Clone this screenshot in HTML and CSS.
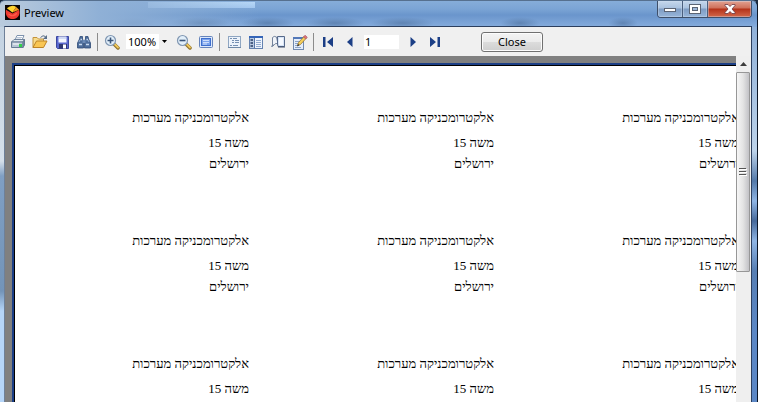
FILE: index.html
```html
<!DOCTYPE html>
<html lang="en">
<head>
    <meta charset="UTF-8">
    <meta name="viewport" content="width=device-width, initial-scale=1.0">
    <title>Preview</title>
    <link rel="stylesheet" href="styles.css">
</head>
<body>
    <div class="window">
        <header class="titlebar">
            <svg class="app-icon" viewBox="0 0 16 16">
                <rect width="16" height="16" fill="#0a0505"/>
                <path d="M1 5 L8 9 L15 5 C17 12 12 15 8 15 C3 15 0 11 1 5Z" fill="#ee3a30"/>
                <path d="M3 9 L8 11 L13 8 C13 11 10 12 8 12 C6 12 4 11 3 9Z" fill="#ff5b4a"/>
                <path d="M2 3.500 Q7 -1 12 2 L8 8Z" fill="#ffd531"/>
                <path d="M12 2 L15 5 L8 8Z" fill="#f39a1f"/>
            </svg>
            <h1 class="title">Preview</h1>
            <div class="window-buttons">
                <button class="win-btn" aria-label="Minimize">
                    <svg width="14" height="10" viewBox="0 0 14 10"><rect x="1.500" y="4.500" width="11" height="3" fill="#fff" stroke="#5b6474"/></svg>
                </button>
                <button class="win-btn" aria-label="Maximize">
                    <svg width="12" height="10" viewBox="0 0 12 10"><rect x=".5" y=".5" width="11" height="9" fill="#fff" stroke="#5b6474"/><rect x="3.500" y="3.500" width="5" height="3" fill="#9db7d8" stroke="#5b6474"/></svg>
                </button>
                <button class="win-btn win-close" aria-label="Close window">
                    <svg width="12" height="10" viewBox="0 0 12 10"><path d="M1 .5H4L6 2.500 8 .5H11V1.500L8 5 11 8.500V9.500H8L6 7.500 4 9.500H1V8.500L4 5 1 1.500Z" fill="#fff" stroke="#6b3a45" stroke-width=".8"/></svg>
                </button>
            </div>
        </header>

        <main class="client">
            <div class="toolbar">
                <button class="tool" aria-label="Print">
                    <svg viewBox="0 0 16 16">
                        <path d="M5 6 L7 1.500H14L12 6Z" fill="#fff" stroke="#7d92ad"/>
                        <path d="M7 3.500H12M6.500 5H11" stroke="#9db0c8" stroke-width=".7"/>
                        <path d="M1.500 8 L4 5.500H14.500L13 8Z" fill="#dfe7ef" stroke="#70849c"/>
                        <path d="M1.500 8H13V13.500H1.500Z" fill="#b7c5d4" stroke="#667b94"/>
                        <path d="M13 8 L14.500 5.500V11L13 13.500Z" fill="#7a8da5" stroke="#667b94"/>
                        <path d="M3 10H9" stroke="#fff"/>
                        <rect x="9" y="10" width="3" height="3" fill="#2fd048"/>
                    </svg>
                </button>
                <button class="tool" aria-label="Open">
                    <svg viewBox="0 0 16 16">
                        <path d="M1 13.500V3.500H5L6.500 5H11.500V7" fill="#f7dc8e" stroke="#c4933b"/>
                        <path d="M1 13.500 L4.500 7H15L11.500 13.500Z" fill="#f9c654" stroke="#bd8326"/>
                        <path d="M8.500 3.500 Q11 0.500 13.500 2.500" fill="none" stroke="#5a6e87"/>
                        <path d="M15 1V5H11Z" fill="#5a6e87"/>
                    </svg>
                </button>
                <button class="tool" aria-label="Save">
                    <svg viewBox="0 0 16 16">
                        <path d="M2.500 2.500H14.500V14.500H3.500L2.500 13.500Z" fill="#5a68cf" stroke="#3a469f"/>
                        <rect x="4.500" y="2.500" width="8" height="6" fill="#f3f6ff"/>
                        <path d="M5 3H12V5H5Z" fill="#cfd9f5"/>
                        <rect x="5" y="10" width="8" height="4.500" fill="#2f3770"/>
                        <rect x="9" y="10.500" width="3" height="4" fill="#fff"/>
                    </svg>
                </button>
                <button class="tool" aria-label="Find">
                    <svg viewBox="0 0 16 16">
                        <path d="M4 2.500H6.500V5L7.500 7V14H1.500V9L3.500 5ZM9.500 2.500H12L12.500 5 14.500 9V14H8.500V7L9.500 5Z" fill="#4d6d9b" stroke="#2e4a76" stroke-width=".8"/>
                        <path d="M3 10.500H6M10 10.500H13M4.500 5.500H6M10.500 5.500H12" stroke="#c9daee" stroke-width="1.500"/>
                        <path d="M3 8L4 6M12 6L13 8" stroke="#93afd4"/>
                        <rect x="6.500" y="6" width="3" height="3" fill="#6c8bb7"/>
                    </svg>
                </button>
                <span class="separator"></span>
                <button class="tool" aria-label="Zoom in">
                    <svg viewBox="0 0 16 16">
                        <path d="M9.500 9.500L14 14" stroke="#8d702a" stroke-width="3.500" stroke-linecap="round"/>
                        <path d="M10.500 10L14 13.500" stroke="#f0c85a" stroke-width="1.800" stroke-linecap="round"/>
                        <circle cx="6.500" cy="6.500" r="5" fill="#e2effa" stroke="#8197b2" stroke-width="1.200"/>
                        <path d="M6.500 3.500V9.500M3.500 6.500H9.500" stroke="#3a5579" stroke-width="1.600"/>
                    </svg>
                </button>
                <div class="zoom-box">
                    <select class="zoom-select" aria-label="Zoom level">
                        <option>100%</option>
                    </select>
                    <svg class="zoom-arrow" viewBox="0 0 11 15"><path d="M3 6H8L5.500 9Z" fill="#000"/></svg>
                </div>
                <button class="tool" aria-label="Zoom out">
                    <svg viewBox="0 0 16 16">
                        <path d="M9.500 9.500L14 14" stroke="#8d702a" stroke-width="3.500" stroke-linecap="round"/>
                        <path d="M10.500 10L14 13.500" stroke="#f0c85a" stroke-width="1.800" stroke-linecap="round"/>
                        <circle cx="6.500" cy="6.500" r="5" fill="#e2effa" stroke="#8197b2" stroke-width="1.200"/>
                        <path d="M3.500 6.500H9.500" stroke="#3a5579" stroke-width="1.600"/>
                    </svg>
                </button>
                <button class="tool" aria-label="Full screen">
                    <svg viewBox="0 0 16 16">
                        <rect x="1.500" y="2.500" width="13" height="11" rx="1" fill="#dce8fb" stroke="#6684bb"/>
                        <rect x="3.500" y="4.500" width="9" height="7" fill="#7ba3ec" stroke="#3e6fce"/>
                        <path d="M5 6.500H11M5 8.500H11M5 10H9" stroke="#e3eeff" stroke-width=".8"/>
                    </svg>
                </button>
                <span class="separator"></span>
                <button class="tool" aria-label="Outline">
                    <svg viewBox="0 0 16 16">
                        <rect x="2.500" y="2.500" width="12" height="11" fill="#edf3fb" stroke="#8fa6c2"/>
                        <path d="M2 13.500H15" stroke="#6f89a8"/>
                        <path d="M4 4.500H6M7 4.500H11M6 6.500H8M9 6.500H13M6 8.500H8M9 8.500H13M4 11.500H6M7 11.500H12" stroke="#7690b2"/>
                    </svg>
                </button>
                <button class="tool" aria-label="Thumbnails">
                    <svg viewBox="0 0 16 16">
                        <rect x="1.500" y="2.500" width="13" height="12" fill="#eef4fd" stroke="#6482b0"/>
                        <path d="M1 3H15" stroke="#3565b8" stroke-width="2"/>
                        <rect x="2" y="4" width="4" height="10" fill="#b9cae2"/>
                        <path d="M2.500 6H5M2.500 9H5M2.500 12H5" stroke="#243c66" stroke-width="1.500"/>
                        <path d="M6.500 4V14" stroke="#5876a6"/>
                        <path d="M8 6.500H13M8 8.500H13M8 10.500H13M8 12.500H13" stroke="#92abd0"/>
                    </svg>
                </button>
                <button class="tool" aria-label="Margins">
                    <svg viewBox="0 0 16 16">
                        <path d="M2.500 12.500V3.500Q4 1.500 6.500 3L8 10Q5.500 8.500 4.500 10.500Z" fill="#f1f4f9" stroke="#74849c"/>
                        <path d="M1 12.500L4.500 10.500" stroke="#74849c"/>
                        <path d="M7.500 2.500H14.500V12.500H8L7.500 10Z" fill="#d7e4f6" stroke="#56698a"/>
                        <path d="M9 4H13V11H9Z" fill="#f5f9ff"/>
                        <path d="M8 13H15" stroke="#3c4d6b"/>
                    </svg>
                </button>
                <button class="tool" aria-label="Edit page">
                    <svg viewBox="0 0 16 16">
                        <rect x="1.500" y="3.500" width="10" height="12" fill="#e5eefb" stroke="#7089af"/>
                        <path d="M1 4H12" stroke="#5378b8" stroke-width="2"/>
                        <path d="M3 7.500H9M3 9.500H7M3 11.500H6M3 13.500H9" stroke="#8ba4c9"/>
                        <path d="M5.500 11.500L6.500 8.500 12 2.500 14 4.500 8.500 10.500Z" fill="#f5cf5b" stroke="#8c6b2c" stroke-width=".7"/>
                        <path d="M11.500 3L13 1.200 15.300 3.200 13.800 5Z" fill="#e0727b" stroke="#a4525b" stroke-width=".6"/>
                        <path d="M5 12.500L6 10 7.500 11.200Z" fill="#2c2c33"/>
                    </svg>
                </button>
                <span class="separator"></span>
                <button class="nav" aria-label="First page">
                    <svg viewBox="0 0 12 12"><path d="M1 1H3.500V11H1ZM11 1V11L5 6Z" fill="#1c3f86"/></svg>
                </button>
                <button class="nav" aria-label="Previous page">
                    <svg viewBox="0 0 12 12"><path d="M8.500 1V11L3 6Z" fill="#1c3f86"/></svg>
                </button>
                <input class="page-number" type="text" value="1" aria-label="Page number">
                <button class="nav" aria-label="Next page">
                    <svg viewBox="0 0 12 12"><path d="M3.500 1V11L9 6Z" fill="#1c3f86"/></svg>
                </button>
                <button class="nav" aria-label="Last page">
                    <svg viewBox="0 0 12 12"><path d="M1 1V11L7 6ZM8.500 1H11V11H8.500Z" fill="#1c3f86"/></svg>
                </button>
                <button class="close-button">Close</button>
            </div>

            <div class="preview">
                <div class="desk">
                    <div class="sheet" lang="he">
                        <div class="label"><p class="name">אלקטרומכניקה מערכות</p><p>משה 15</p><p>ירושלים</p></div>
                        <div class="label"><p class="name">אלקטרומכניקה מערכות</p><p>משה 15</p><p>ירושלים</p></div>
                        <div class="label"><p class="name">אלקטרומכניקה מערכות</p><p>משה 15</p><p>ירושלים</p></div>
                        <div class="label"><p class="name">אלקטרומכניקה מערכות</p><p>משה 15</p><p>ירושלים</p></div>
                        <div class="label"><p class="name">אלקטרומכניקה מערכות</p><p>משה 15</p><p>ירושלים</p></div>
                        <div class="label"><p class="name">אלקטרומכניקה מערכות</p><p>משה 15</p><p>ירושלים</p></div>
                        <div class="label"><p class="name">אלקטרומכניקה מערכות</p><p>משה 15</p></div>
                        <div class="label"><p class="name">אלקטרומכניקה מערכות</p><p>משה 15</p></div>
                        <div class="label"><p class="name">אלקטרומכניקה מערכות</p><p>משה 15</p></div>
                    </div>
                </div>
                <div class="scrollbar">
                    <svg class="scroll-up" viewBox="0 0 15 16"><path d="M4 10L7.500 6 11 10Z" fill="#3c3c3c"/></svg>
                    <div class="thumb">
                        <svg width="8" height="8" viewBox="0 0 8 8"><path d="M0 .5H7M0 3.500H7M0 6.500H7" stroke="#555"/><path d="M1 1.500H8M1 4.500H8M1 7.500H8" stroke="#fff"/></svg>
                    </div>
                </div>
            </div>
        </main>
    </div>
</body>
</html>
```
FILE: styles.css
```css
:root {
    --frame-line: #2c3f5e;
    --bar: #f0f0f0;
    --page-edge: #1c3f86;
}

* {
    margin: 0;
    padding: 0;
    box-sizing: border-box;
}

body {
    height: 100vh;
    overflow: hidden;
    background: #1b2a40;
    font-family: "Noto Sans", sans-serif;
    font-size: 11px;
    color: #000;
}

button {
    border: none;
    background: none;
    font: inherit;
}

svg {
    display: block;
}

.window {
    display: flex;
    flex-direction: column;
    height: 100vh;
    padding: 0 5px 0 4px;
    border-right: 1px solid #0c1626;
    border-top: 1px solid #56708f;
    border-radius: 5px 6px 0 0;
    background:
        linear-gradient(90deg, #b9cbdd 0, #8fb0d6 100px, transparent 260px) 0 0 / 100% 26px no-repeat,
        radial-gradient(ellipse at center, #5f84b3 0, transparent 70%) 105px 16px / 50px 12px no-repeat,
        radial-gradient(ellipse at center, #5f84b3 0, transparent 70%) 170px 16px / 60px 12px no-repeat,
        radial-gradient(ellipse at center, #5f84b3 0, transparent 70%) 240px 16px / 55px 12px no-repeat,
        radial-gradient(ellipse at center, #5f84b3 0, transparent 70%) 305px 16px / 60px 12px no-repeat,
        radial-gradient(ellipse at center, #5f84b3 0, transparent 70%) 370px 16px / 65px 12px no-repeat,
        radial-gradient(ellipse at center, #5f84b3 0, transparent 70%) 500px 16px / 40px 12px no-repeat,
        radial-gradient(ellipse at center, #5f84b3 0, transparent 70%) 608px 16px / 30px 12px no-repeat,
        linear-gradient(#b8d8f7, #a4c8f0) 148px 1px / 107px 6px no-repeat,
        linear-gradient(#86add9 0, #7ba4d5 8px, #6a95cc 14px, #83aadb 25px) 0 0 / 100% 26px no-repeat,
        linear-gradient(#c0d0e0 0, #d5e0ea 160px, #7f9fc4 175px, #7394b8 290px, #b5d5f8 310px) 0 0 / 5px 100% no-repeat,
        linear-gradient(#86a9d4 0, #bdd3ea 150px, #5379a9 180px, #8fb5e4 200px, #46699a 220px, #8fb5e4 240px, #567eb3 270px, #5b87c5 330px);
}

.titlebar {
    display: flex;
    align-items: flex-start;
    flex: 0 0 25px;
}

.app-icon {
    width: 15px;
    height: 15px;
    margin-top: 4px;
    margin-left: 1px;
}

.title {
    margin: 4px auto 0 4px;
    font-size: 11px;
    font-weight: normal;
    line-height: 16px;
}

.window-buttons {
    display: flex;
    height: 17px;
    border: 1px solid #3e4f69;
    border-top: none;
    border-radius: 0 0 4px 4px;
    overflow: hidden;
}

.win-btn {
    display: flex;
    align-items: center;
    justify-content: center;
    width: 25px;
    border-right: 1px solid #4a5f7e;
    background: linear-gradient(#c5d7ec 0, #aac2df 7px, #7e9cc3 8px, #98b6da);
    box-shadow: inset 0 0 0 1px #cfdff066;
}

.win-close {
    width: 43px;
    border-right: none;
    background: linear-gradient(#e2a292 0, #cf705a 7px, #b43219 8px, #d2684a);
}

.client {
    display: flex;
    flex-direction: column;
    flex: 1;
    min-height: 0;
    border: 1px solid var(--frame-line);
    border-bottom: none;
    border-left-color: #6e8098;
    background: var(--bar);
}

.toolbar {
    display: flex;
    align-items: center;
    gap: 6px;
    flex: 0 0 29px;
    padding-left: 5px;
}

.tool {
    width: 16px;
    height: 16px;
}

.nav {
    width: 16px;
    height: 12px;
}

.nav svg {
    width: 12px;
    height: 12px;
    margin: 0 auto;
}

.separator {
    width: 1px;
    height: 18px;
    margin-left: -1px;
    background: #8c8c8c;
}

.zoom-box {
    position: relative;
    width: 44px;
    height: 15px;
    background: #fff;
}

.zoom-select {
    width: 44px;
    height: 15px;
    padding-left: 2px;
    border: none;
    appearance: none;
    background: transparent;
    font: inherit;
    line-height: 15px;
}

.zoom-arrow {
    position: absolute;
    top: 0;
    right: 0;
    width: 11px;
    height: 15px;
    background: var(--bar);
    pointer-events: none;
}

.page-number {
    width: 35px;
    height: 14px;
    padding-left: 1px;
    border: none;
    background: #fff;
    font: inherit;
    line-height: 14px;
}

.close-button {
    width: 62px;
    height: 20px;
    margin-left: 32px;
    border: 1px solid #707070;
    border-radius: 3px;
    background: linear-gradient(#f3f3f3 0, #ebebeb 50%, #dcdcdc 50%, #cfcfcf);
    box-shadow: inset 0 0 0 1px #fcfcfc;
    line-height: 16px;
}

.preview {
    display: flex;
    flex: 1;
    min-height: 0;
}

.desk {
    flex: 1;
    min-width: 0;
    padding: 9px 0 0 9px;
    overflow: hidden;
    background: #808080;
}

.sheet {
    display: grid;
    grid-template-columns: repeat(3, 245px);
    grid-auto-rows: 123px;
    width: max-content;
    min-height: 100%;
    padding-top: 41px;
    border-top: 1px solid #000;
    border-left: 1px solid #000;
    outline: 2px solid var(--page-edge);
    background: #fff;
    font-family: "Liberation Serif", serif;
    font-size: 13px;
    line-height: 21px;
}

.label {
    direction: rtl;
    padding-right: 11px;
}

.name {
    margin-bottom: 4px;
    white-space: nowrap;
}

.scrollbar {
    width: 15px;
    background: #efefef;
}

.scroll-up {
    width: 15px;
    height: 16px;
}

.thumb {
    display: flex;
    align-items: center;
    justify-content: center;
    width: 14px;
    height: 200px;
    border: 1px solid #979797;
    border-radius: 1px;
    background: linear-gradient(90deg, #f6f6f6, #e4e4e4 50%, #c2c2c6);
}
```
